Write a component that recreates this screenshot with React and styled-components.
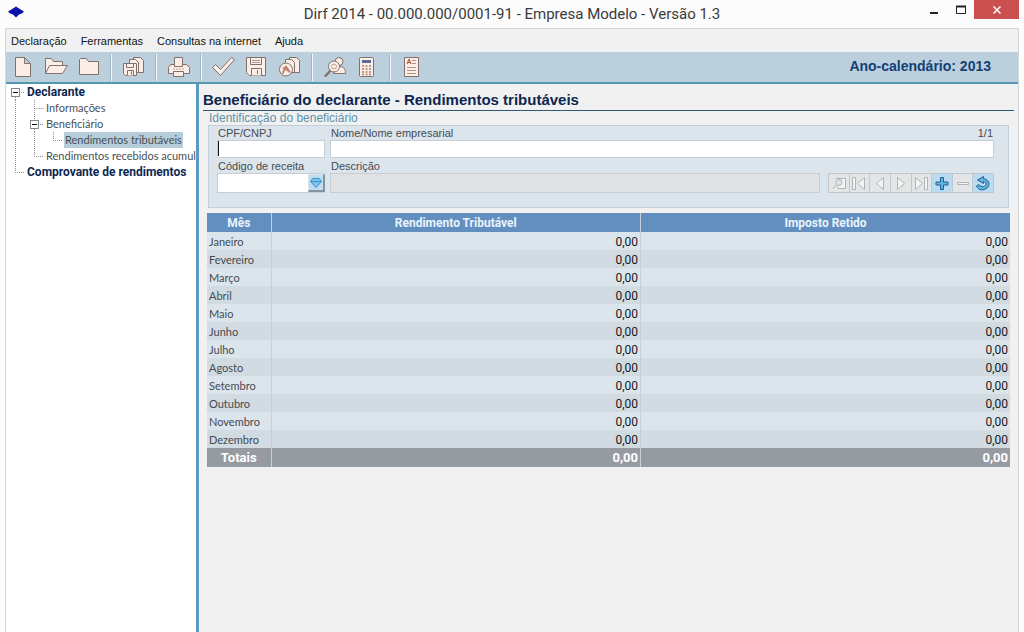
import styled, { createGlobalStyle } from 'styled-components';

const GlobalStyle = createGlobalStyle`
    * {
        box-sizing: border-box;
    }
    body {
        margin: 0;
        background-color: #fcfcfc;
        font-family: 'Liberation Sans', Arial, sans-serif;
        font-size: 11px;
        color: #444b52;
    }
    button, input, select {
        font: inherit;
        color: inherit;
    }
`;

const Window = styled.div`
    display: flex;
    flex-direction: column;
    min-height: 100vh;
    padding: 0 5px;
`;

const TitleBar = styled.header`
    display: grid;
    grid-template-columns: 1fr auto 1fr;
    height: 28px;
`;

const AppLogo = styled.svg`
    width: 16px;
    height: 12px;
    margin: 6px 0 0 3px;
`;

const WindowTitle = styled.h1`
    margin: 0;
    font: 400 15px/28px Roboto, sans-serif;
    color: #3a3a3a;
`;

const WindowButtons = styled.div`
    display: flex;
    justify-content: flex-end;
`;

const WindowButton = styled.button`
    width: ${(props) => (props.$close ? 45 : 27)}px;
    height: 19px;
    padding: 0;
    border: 0;
    background-color: ${(props) => (props.$close ? '#c9504f' : 'transparent')};
    svg {
        display: block;
        margin: auto;
    }
`;

const Frame = styled.div`
    display: flex;
    flex-direction: column;
    flex: 1;
    border: 1px solid #d5d7d9;
    border-bottom: 0;
    background-color: #f1f1f1;
`;

const MenuBar = styled.nav`
    display: flex;
    gap: 14px;
    height: 23px;
    padding-left: 5px;
`;

const MenuItem = styled.button`
    padding: 0;
    border: 0;
    background: none;
    color: #111;
`;

const ToolBar = styled.div`
    display: flex;
    align-items: center;
    height: 32px;
    border-bottom: 2px solid #5597ae;
    background-color: #bccfdd;
`;

const ToolButton = styled.button`
    width: 33px;
    height: 26px;
    padding: 0;
    border: 0;
    background: none;
    svg {
        display: block;
        margin: auto;
    }
`;

const Separator = styled.span`
    width: 2px;
    height: 27px;
    margin: 0 5px;
    border-left: 1px solid #9fb6c6;
    background-color: #f4f8fb;
`;

const Year = styled.strong`
    margin-left: auto;
    padding: 0 27px 2px 0;
    font-size: 14px;
    color: #123f76;
`;

const Body = styled.div`
    display: flex;
    flex: 1;
`;

const Sidebar = styled.aside`
    width: 193px;
    flex-shrink: 0;
    overflow: hidden;
    border-right: 3px solid #5d9cc2;
    background-color: #fff;
`;

const Tree = styled.ul`
    margin: 0;
    padding: 0;
    list-style: none;
`;

const TreeRow = styled.li`
    display: flex;
    height: 16px;
    svg {
        flex-shrink: 0;
    }
`;

const TreeLink = styled.a`
    margin-left: 1px;
    padding: 0 1px;
    font: ${(props) => (props.$bold ? '700 12px/16px Roboto' : '400 11px/16px Lato')}, sans-serif;
    color: ${(props) => (props.$bold ? '#0c2750' : '#4a4f55')};
    background-color: ${(props) => (props.$active ? '#b5cdda' : 'transparent')};
    text-decoration: none;
    white-space: nowrap;
`;

const Main = styled.main`
    flex: 1;
    padding: 8px 4px 0;
`;

const PageTitle = styled.h2`
    margin: 0;
    height: 19px;
    border-bottom: 1px solid #2f5873;
    font-size: 15px;
    line-height: 16px;
    color: #0c2750;
`;

const Content = styled.div`
    padding: 0 4px;
`;

const GroupTitle = styled.h3`
    margin: 0;
    padding-left: 2px;
    font-size: 12px;
    font-weight: 400;
    line-height: 14px;
    color: #5f93a8;
`;

const Panel = styled.form`
    height: 83px;
    margin: 0 1px;
    padding: 0 14px 0 8px;
    border: 1px solid #c3cfd9;
    background-color: #dde5ec;
`;

const FieldRow = styled.div`
    display: flex;
    align-items: flex-end;
    gap: 5px;
    padding-bottom: ${(props) => (props.$last ? 0 : 1)}px;
`;

const Field = styled.div`
    width: ${(props) => (props.$wide ? 'auto' : '108px')};
    flex: ${(props) => (props.$wide ? 1 : 'none')};
`;

const LabelLine = styled.div`
    display: flex;
    justify-content: space-between;
    padding: 0 1px;
    line-height: 14px;
`;

const TextInput = styled.input`
    display: block;
    width: 100%;
    height: 18px;
    padding: 0 3px;
    border: 1px solid #c5ced6;
    background-color: #fff;
    ${(props) => props.$caret && 'background: #fff linear-gradient(#111, #111) no-repeat 0 0 / 1px 15px;'}
    &:disabled {
        height: 20px;
        background-color: #e0e1e2;
    }
`;

const SelectBox = styled.div`
    position: relative;
    select {
        display: block;
        width: 100%;
        height: 20px;
        border: 1px solid #c5ced6;
        border-radius: 0;
        background-color: #fff;
        appearance: none;
    }
    span {
        position: absolute;
        top: 1px;
        right: 0;
        width: 17px;
        height: 18px;
        border: 1px solid #d7e6f1;
        border-right: 2px solid #8493a0;
        border-bottom: 2px solid #8493a0;
        background-color: #bfdcf0;
        pointer-events: none;
    }
    svg {
        display: block;
    }
`;

const NavButtons = styled.div`
    display: flex;
    width: 166px;
    margin-left: 3px;
    border: 1px solid #c0c8ce;
`;

const NavButton = styled.button`
    flex: 1;
    height: 18px;
    padding: 0;
    border: 0;
    background-color: #b9dcf3;
    & + & {
        border-left: 1px solid #c0c8ce;
    }
    &:disabled {
        background-color: #e3e5e6;
    }
    svg {
        display: block;
        margin: auto;
    }
`;

const Table = styled.table`
    width: 100%;
    margin-top: 5px;
    border-collapse: collapse;
    table-layout: fixed;
    font-family: Roboto, sans-serif;
    th, td {
        padding: 0 2px;
        border-left: 1px solid #c4d0da;
        line-height: 18px;
    }
    tr > :first-child {
        border-left: 0;
    }
`;

const HeadCell = styled.th`
    width: ${(props) => (props.$narrow ? '64px' : 'auto')};
    height: 19px;
    background-color: #628fc0;
    font-size: 12px;
    color: #e9f3fb;
`;

const MonthRow = styled.tr`
    height: 18px;
    background-color: ${(props) => (props.$odd ? '#d2dbe2' : '#dde5ec')};
    th, td {
        padding-top: 2px;
        line-height: 16px;
    }
    th {
        font-family: Lato, sans-serif;
        font-size: 11px;
        font-weight: 400;
        text-align: left;
    }
    td {
        font-size: 12px;
        text-align: right;
        color: #15181b;
    }
`;

const TotalRow = styled.tr`
    height: 19px;
    background-color: #969ba2;
    color: #fff;
    font-size: 13px;
    font-weight: 700;
    td {
        text-align: right;
    }
`;

const menus = ['Declaração', 'Ferramentas', 'Consultas na internet', 'Ajuda'];

const months = [
    'Janeiro',
    'Fevereiro',
    'Março',
    'Abril',
    'Maio',
    'Junho',
    'Julho',
    'Agosto',
    'Setembro',
    'Outubro',
    'Novembro',
    'Dezembro',
];

const tree = [
    { text: 'Declarante', guides: ['root'], bold: true },
    { text: 'Informações', guides: ['line', 'tee'] },
    { text: 'Beneficiário', guides: ['line', 'box'] },
    { text: 'Rendimentos tributáveis', guides: ['line', 'line', 'end'], active: true },
    { text: 'Rendimentos recebidos acumula', guides: ['line', 'end'] },
    { text: 'Comprovante de rendimentos', guides: ['end'], bold: true },
];

// dotted connector before a tree item, with the collapse box where it has children
const guidePaths = {
    root: 'M9.5 13V16M15 8.5H19',
    line: 'M9.5 0V16',
    tee: 'M9.5 0V16M9.5 8.5H19',
    box: 'M9.5 0V4M9.5 13V16M15 8.5H19',
    end: 'M9.5 0V8.5H19',
};

const Guide = ({ kind }) => (
    <svg width="19" height="16" fill="none" aria-hidden="true">
        <path d={guidePaths[kind]} stroke="#8b8f93" strokeDasharray="1 1" />
        {(kind === 'root' || kind === 'box') && (
            <>
                <rect x="5.5" y="4.5" width="8" height="8" fill="#fff" stroke="#7e8890" />
                <path d="M7 8.5h5" stroke="#111" />
            </>
        )}
    </svg>
);

const toolIcons = {
    'Nova declaração': (
        <path d="M4.5 2.5h9l6 6v13h-15zM13.5 2.5v6h6" />
    ),
    'Abrir declaração': (
        <>
            <path d="M1.5 18.5v-15h6l2 3h9v4" />
            <path d="M1.5 18.5l4-8h18l-5 8z" />
        </>
    ),
    'Fechar declaração': (
        <path d="M2.5 19.5v-15l1-1h6l2 3h10v13z" />
    ),
    'Cópia de segurança': (
        <>
            <path d="M11.5 2.5h7l3 3v12h-10z" />
            <path d="M7.5 4.5h6l3 3v10h-9z" />
            <path d="M1.5 8.5h13v12h-11l-2-2z" />
            <path d="M4.5 8.5h7v4h-7zM5.5 20.5v-5h6v5M9.5 16.5v3" />
        </>
    ),
    Imprimir: (
        <>
            <path d="M7.5 2.5h8v9h-8z" />
            <path d="M3.5 9.5h4v2h8v-2h4l3 3v6h-21v-6z" />
            <path d="M6.5 16.5h10v5h-10z" />
            <path d="M6 14h11" stroke="#c9a090" strokeDasharray="2 1" />
        </>
    ),
    Verificar: <path d="M.5 12.5l3-3 5 5L19.5 2.5l3 2L8.5 20.5z" />,
    Gravar: (
        <>
            <path d="M1.5 2.5h19v18h-16l-3-3z" />
            <path d="M5.5 2.5h11v7h-11zM6.5 20.5v-7h10v7M12.5 15v4" />
            <path d="M7 5.5h8M7 7.5h8" strokeWidth=".7" />
        </>
    ),
    'Apurar erros': (
        <>
            <path d="M11.5 2.500h7l3 3v12h-10z" />
            <path d="M7.500 4.500h6l3 3v10h-9z" />
            <circle cx="8" cy="14.500" r="6.500" />
            <path d="M4.500 18.500l3.500-7 4 6M5 12.500l6.500 4" stroke="#bd8776" strokeWidth="2" fill="none" />
        </>
    ),
    'Consultar beneficiário': (
        <>
            <circle cx="16" cy="6.500" r="4" />
            <path d="M10.500 18.500c0-5 2-7 6-7s6 2 6 7z" />
            <path d="M2 21.500l5.500-6" strokeWidth="2.500" />
            <circle cx="11" cy="11.500" r="5.500" />
            <circle cx="11" cy="11.500" r="2.500" stroke="#c79b89" />
        </>
    ),
    Calculadora: (
        <>
            <rect x="3.500" y="2.500" width="14" height="19" rx="1" />
            <path d="M6 6.500h9" stroke="#5d6b94" strokeWidth="3" />
            <path d="M6 11h9M6 14h9M6 17h9M6 19.500h9" stroke="#b07c6c" strokeWidth="1.500" strokeDasharray="2 1.500" />
        </>
    ),
    Ajuda: (
        <>
            <path d="M3.500 2.500h14v19h-14z" />
            <path d="M6 9l2-5 2 5M6.500 7.500h3" stroke="#a2553b" fill="none" />
            <path d="M11 5.500h4M11 8.500h4M6 12.500h9M6 15.500h9M6 18.500h9" stroke="#b78f83" />
        </>
    ),
};

const toolGroups = [
    ['Nova declaração', 'Abrir declaração', 'Fechar declaração'],
    ['Cópia de segurança'],
    ['Imprimir'],
    ['Verificar', 'Gravar', 'Apurar erros'],
    ['Consultar beneficiário', 'Calculadora'],
    ['Ajuda'],
];

const Tool = ({ name }) => (
    <ToolButton type="button" aria-label={name}>
        <svg width="24" height="24" fill="#faeee7" stroke="#84706b" strokeLinejoin="round">
            {toolIcons[name]}
        </svg>
    </ToolButton>
);

const navIcons = [
    ['Localizar', 'M5.500 3.500h10v10h-7l-1-2M6 7.500a3 3 0 1 0 6 0a3 3 0 1 0-6 0M6.500 10l-4 3.500'],
    ['Primeiro', 'M2.500 2.500h3v12h-3zM14.500 2.500v12l-7-6z'],
    ['Anterior', 'M12.500 2.500v12l-7-6z'],
    ['Próximo', 'M5.500 2.500v12l7-6z'],
    ['Último', 'M3.500 2.500v12l7-6zM12.500 2.500h3v12h-3z'],
    ['Incluir', 'M7.500 2.500h3v4.500h4.500v3h-4.500v4.500h-3v-4.500h-4.500v-3h4.500z'],
    ['Excluir', 'M3.500 7.500h11v2h-11z'],
    ['Desfazer', 'M9.500 1.500L3.500 5l6 3.500V6.500C13 7 13 11 9.500 11.500C7.500 12 6 11 5 9.500L2.500 11C4 14.500 7 15.500 10 14.500C17 13 16.500 4.500 9.500 3.500z'],
];

const App = () => {
    return (
        <>
            <GlobalStyle />
            <Window>
                <TitleBar>
                    <AppLogo viewBox="0 0 16 12" aria-hidden="true">
                        <path d="M5 2.500l3-2 3 2 5 3-2 2-3 1-3 3-3-3-3-1-2-2z" fill="#0b10a8" />
                    </AppLogo>
                    <WindowTitle>Dirf 2014 - 00.000.000/0001-91 - Empresa Modelo - Versão 1.3</WindowTitle>
                    <WindowButtons>
                        <WindowButton type="button" aria-label="Minimizar">
                            <svg width="10" height="10">
                                <path d="M1 8h8" stroke="#222" strokeWidth="2" />
                            </svg>
                        </WindowButton>
                        <WindowButton type="button" aria-label="Maximizar">
                            <svg width="10" height="10" fill="none">
                                <path d="M.5 1v7.500h9V1" stroke="#222" />
                                <path d="M0 1.500h10" stroke="#222" strokeWidth="2" />
                            </svg>
                        </WindowButton>
                        <WindowButton type="button" aria-label="Fechar" $close>
                            <svg width="8" height="8">
                                <path d="M.5.5l7 7M7.500.5l-7 7" stroke="#fff" strokeWidth="1.500" />
                            </svg>
                        </WindowButton>
                    </WindowButtons>
                </TitleBar>
                <Frame>
                    <MenuBar>
                        {menus.map((menu) => (
                            <MenuItem key={menu} type="button">
                                {menu}
                            </MenuItem>
                        ))}
                    </MenuBar>
                    <ToolBar>
                        {toolGroups.map((group, i) => [
                            i > 0 && <Separator key={'sep' + i} />,
                            ...group.map((name) => <Tool key={name} name={name} />),
                        ])}
                        <Year>Ano-calendário: 2013</Year>
                    </ToolBar>
                    <Body>
                        <Sidebar>
                            <Tree>
                                {tree.map((item) => (
                                    <TreeRow key={item.text}>
                                        {item.guides.map((kind, i) => (
                                            <Guide key={i} kind={kind} />
                                        ))}
                                        <TreeLink href="#" $bold={item.bold} $active={item.active}>
                                            {item.text}
                                        </TreeLink>
                                    </TreeRow>
                                ))}
                            </Tree>
                        </Sidebar>
                        <Main>
                            <PageTitle>Beneficiário do declarante - Rendimentos tributáveis</PageTitle>
                            <Content>
                                <GroupTitle>Identificação do beneficiário</GroupTitle>
                                <Panel>
                                    <FieldRow>
                                        <Field>
                                            <LabelLine>
                                                <label htmlFor="cpf">CPF/CNPJ</label>
                                            </LabelLine>
                                            <TextInput id="cpf" $caret />
                                        </Field>
                                        <Field $wide>
                                            <LabelLine>
                                                <label htmlFor="nome">Nome/Nome empresarial</label>
                                                <span>1/1</span>
                                            </LabelLine>
                                            <TextInput id="nome" />
                                        </Field>
                                    </FieldRow>
                                    <FieldRow $last>
                                        <Field>
                                            <LabelLine>
                                                <label htmlFor="codigo">Código de receita</label>
                                            </LabelLine>
                                            <SelectBox>
                                                <select id="codigo" />
                                                <span>
                                                    <svg width="14" height="15" fill="#7cc4ee" stroke="#3f93c8">
                                                        <path d="M3.500 3.500h7l2 3-5.500 6-5.500-6zM2 6.500h10" />
                                                    </svg>
                                                </span>
                                            </SelectBox>
                                        </Field>
                                        <Field $wide>
                                            <LabelLine>
                                                <label htmlFor="descricao">Descrição</label>
                                            </LabelLine>
                                            <TextInput id="descricao" disabled />
                                        </Field>
                                        <NavButtons>
                                            {navIcons.map(([name, d]) => {
                                                const disabled = name !== 'Incluir' && name !== 'Desfazer';
                                                return (
                                                    <NavButton key={name} type="button" aria-label={name} disabled={disabled}>
                                                        <svg
                                                            width="18"
                                                            height="17"
                                                            fill={disabled ? '#f3f4f4' : '#62b2df'}
                                                            stroke={disabled ? '#b0b4b7' : '#235f91'}
                                                            strokeLinejoin="round"
                                                        >
                                                            <path d={d} />
                                                        </svg>
                                                    </NavButton>
                                                );
                                            })}
                                        </NavButtons>
                                    </FieldRow>
                                </Panel>
                                <Table>
                                    <thead>
                                        <tr>
                                            <HeadCell $narrow>Mês</HeadCell>
                                            <HeadCell>Rendimento Tributável</HeadCell>
                                            <HeadCell>Imposto Retido</HeadCell>
                                        </tr>
                                    </thead>
                                    <tbody>
                                        {months.map((month, i) => (
                                            <MonthRow key={month} $odd={i % 2 === 1}>
                                                <th scope="row">{month}</th>
                                                <td>0,00</td>
                                                <td>0,00</td>
                                            </MonthRow>
                                        ))}
                                    </tbody>
                                    <tfoot>
                                        <TotalRow>
                                            <th scope="row">Totais</th>
                                            <td>0,00</td>
                                            <td>0,00</td>
                                        </TotalRow>
                                    </tfoot>
                                </Table>
                            </Content>
                        </Main>
                    </Body>
                </Frame>
            </Window>
        </>
    );
};

export default App;
